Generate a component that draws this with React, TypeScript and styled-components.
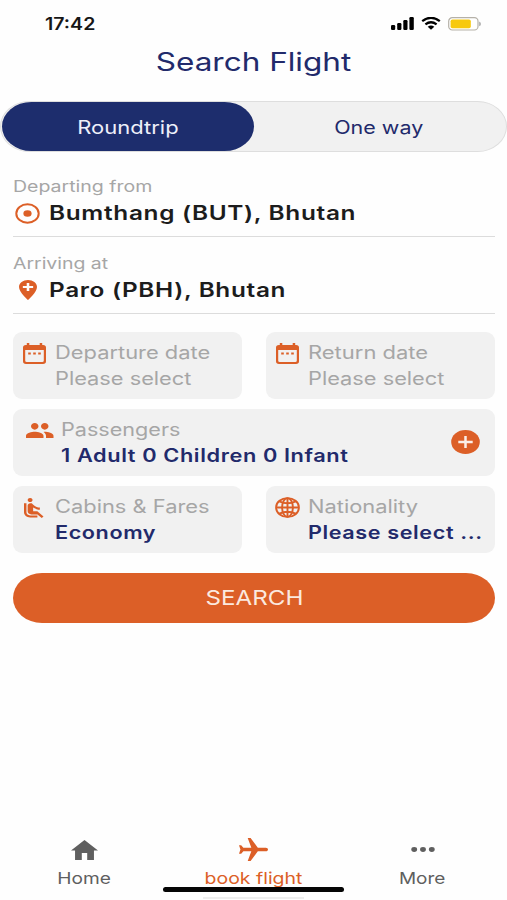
import React from "react";
import styled, { createGlobalStyle } from "styled-components";

const color = {
  navy: "#1d2d6d",
  navyText: "#222a6b",
  orange: "#dc5f27",
  grey: "#a6a6a6",
  panel: "#f1f1f1",
  line: "#dedede",
  nav: "#5f5f5f",
};

const GlobalStyle = createGlobalStyle`
  *, *::before, *::after { box-sizing: border-box; }
  body {
    margin: 0;
    background: #fefefe;
    font-family: Inter, "Liberation Sans", sans-serif;
    overflow: hidden;
  }
  button { font: inherit; border: 0; padding: 0; background: none; text-align: left; }
`;

const Screen = styled.div`
  width: 507px;
  height: 900px;
  display: flex;
  flex-direction: column;
  overflow: hidden;
`;

/* Wide lettering: glyphs keep their height and grow sideways. */
const Wide = styled.span<{ $x?: number; $from?: string }>`
  display: inline-block;
  white-space: pre;
  transform: scaleX(${(p) => p.$x ?? 1.21});
  transform-origin: ${(p) => p.$from ?? "left"} center;
`;

const StatusBar = styled.header`
  height: 46px;
  flex: none;
  display: flex;
  align-items: center;
  justify-content: space-between;
  padding: 1px 26px 0 45px;
`;

const Clock = styled.time`
  font-size: 17px;
  font-weight: 600;
  color: #161616;
`;

const StatusIcons = styled.div`
  display: flex;
  align-items: center;
  gap: 7px;
`;

const Title = styled.h1`
  margin: 0;
  height: 32px;
  line-height: 32px;
  flex: none;
  text-align: center;
  font-size: 25.3px;
  font-weight: 400;
  color: ${color.navyText};
`;

const TripSwitch = styled.div`
  flex: none;
  margin-top: 23px;
  height: 51px;
  display: grid;
  grid-template-columns: 1fr 1fr;
  border: 1px solid ${color.line};
  border-radius: 30px / 26px;
  background: ${color.panel};
`;

const TripOption = styled.button<{ $active?: boolean }>`
  text-align: center;
  font-size: 18.2px;
  border-radius: 30px / 25px;
  margin: 0 1px 0 ${(p) => (p.$active ? 1 : 0)}px;
  margin-right: ${(p) => (p.$active ? 0 : 2)}px;
  color: ${(p) => (p.$active ? "#eef0fa" : color.navyText)};
  background: ${(p) => (p.$active ? color.navy : "transparent")};
`;

const Form = styled.main`
  flex: 1;
  display: flex;
  flex-direction: column;
  padding: 25px 12px 0 13px;
`;

const Place = styled.section`
  height: 60px;
  border-bottom: 1px solid #dcdcdc;
  margin-bottom: 17px;
`;

const PlaceLabel = styled.div`
  height: 20px;
  line-height: 20px;
  font-size: 15.8px;
  color: ${color.grey};
`;

const PlaceValue = styled.div`
  display: flex;
  align-items: center;
  height: 32px;
  font-size: 19.8px;
  font-weight: 600;
  letter-spacing: 0.55px;
  color: #1c1c1c;
`;

const PlaceIcon = styled.span`
  flex: none;
  width: 29px;
  margin-right: 7px;
  display: flex;
  justify-content: center;
  color: ${color.orange};
`;

const Cards = styled.div`
  display: grid;
  grid-template-columns: 229px 229px;
  column-gap: 24px;
  row-gap: 10px;
  grid-auto-rows: 67px;
  margin-top: 1px;
`;

const Card = styled.button<{ $full?: boolean }>`
  grid-column: ${(p) => (p.$full ? "1 / -1" : "auto")};
  display: flex;
  align-items: flex-start;
  padding: 8px 15px 0 ${(p) => (p.$full ? 13 : 8)}px;
  border-radius: 9px;
  background: ${color.panel};
`;

const CardIcon = styled.span<{ $wide?: boolean }>`
  flex: none;
  width: ${(p) => (p.$wide ? 28 : 26)}px;
  margin-right: ${(p) => (p.$wide ? 6.5 : 7.5)}px;
  height: 27px;
  display: flex;
  align-items: center;
  justify-content: center;
  color: ${color.orange};
`;

const CardText = styled.span`
  flex: 1;
  min-width: 0;
  display: flex;
  flex-direction: column;
  align-items: flex-start;
  font-size: 18px;
  line-height: 26px;
  color: ${color.grey};
`;

const Strong = styled(Wide)`
  font-weight: 600;
  letter-spacing: 0.5px;
  color: ${color.navyText};
`;

const AddSlot = styled.span`
  align-self: center;
  display: flex;
  margin-top: -9px;
  color: ${color.orange};
`;

const SearchButton = styled.button`
  margin-top: 20px;
  height: 50px;
  border-radius: 29px / 25px;
  background: ${color.orange};
  color: #fbe9df;
  font-size: 20px;
  text-align: center;
`;

const TabBar = styled.nav`
  flex: none;
  height: 51px;
  display: grid;
  grid-template-columns: repeat(3, 1fr);
`;

const Tab = styled.a<{ $active?: boolean }>`
  display: flex;
  flex-direction: column;
  align-items: center;
  font-size: 16.5px;
  line-height: 24px;
  color: ${(p) => (p.$active ? color.orange : color.nav)};
`;

const TabIcon = styled.span`
  height: 27px;
  margin-bottom: 3px;
  display: flex;
  align-items: center;
`;

const HomeArea = styled.footer`
  position: relative;
  z-index: 1;
  flex: none;
  height: 13px;
  display: flex;
  flex-direction: column;
  align-items: center;
  gap: 5px;
`;

const HomeIndicator = styled.div`
  flex: none;
  width: 181px;
  height: 5px;
  border-radius: 3px;
  background: #050505;
`;

const Underline = styled.div`
  flex: none;
  width: 101px;
  height: 2px;
  background: #ededed;
`;

type GlyphProps = { w: number; h: number; box: string; children: React.ReactNode };

const Glyph = ({ w, h, box, children }: GlyphProps) => (
  <svg width={w} height={h} viewBox={box} preserveAspectRatio="none" fill="currentColor" aria-hidden>
    {children}
  </svg>
);

const Signal = () => (
  <Glyph w={23} h={13} box="0 0 23 13">
    <rect x="0" y="8" width="4.2" height="5" rx="1.2" />
    <rect x="6.2" y="6" width="4.2" height="7" rx="1.2" />
    <rect x="12.3" y="3" width="4.2" height="10" rx="1.2" />
    <rect x="18.4" y="0" width="4.4" height="13" rx="1.2" />
  </Glyph>
);

const Wifi = () => (
  <Glyph w={20} h={13} box="0 0 20 13">
    <path d="M1.2 4.2Q10-2.6 18.8 4.2M4.4 7.4Q10 3.2 15.6 7.4" fill="none" stroke="currentColor" strokeWidth="2.3" />
    <path d="M10 12.8 6.7 9.7Q10 7.4 13.3 9.7z" />
  </Glyph>
);

const Battery = () => (
  <Glyph w={33} h={14} box="0 0 33 14">
    <rect x=".7" y=".7" width="29.3" height="12.3" rx="3.6" fill="#fff" stroke="#b5b1a8" strokeWidth="1.2" />
    <rect x="2.6" y="2.5" width="20.2" height="8.8" rx="1.8" fill="#f7c90f" />
    <path d="M31.2 4.6q1.7.7 1.7 2.3t-1.7 2.3z" fill="#a9a9a9" />
  </Glyph>
);

const Origin = () => (
  <Glyph w={25} h={21} box="0 0 25 21">
    <ellipse cx="12.5" cy="10.5" rx="11.2" ry="9.3" fill="none" stroke="currentColor" strokeWidth="2" />
    <ellipse cx="12.5" cy="10.5" rx="4.1" ry="3.3" />
  </Glyph>
);

const Destination = () => (
  <Glyph w={18} h={20} box="5 2 14 20">
    <path d="M12 2C8.14 2 5 5.14 5 9c0 5.25 7 13 7 13s7-7.75 7-13c0-3.86-3.14-7-7-7zm4 8h-3v3h-2v-3H8V8h3V5h2v3h3v2z" />
  </Glyph>
);

const Calendar = () => (
  <Glyph w={23} h={21} box="0 0 23 21">
    <path
      fillRule="evenodd"
      d="M3.8 0h2.5v2h10.4V0h2.500v2h.9Q23 2 23 4.600V18.300Q23 21 20 21H3Q0 21 0 18.300V4.600Q0 2 2.900 2h.9zM2.200 7v10.500q0 1.600 1.500 1.600h15.600q1.500 0 1.500-1.600V7z"
    />
    <path d="M5.200 9.500h2.600v2H5.200zm5 0h2.600v2h-2.600zm5 0h2.600v2h-2.600z" />
  </Glyph>
);

const People = () => (
  <Glyph w={27.5} h={15.5} box="1 5 22 14">
    <path d="M16 11c1.660 0 2.990-1.340 2.990-3S17.660 5 16 5c-1.660 0-3 1.340-3 3s1.340 3 3 3zm-8 0c1.660 0 2.990-1.340 2.990-3S9.660 5 8 5C6.340 5 5 6.340 5 8s1.340 3 3 3zm0 2c-2.330 0-7 1.170-7 3.500V19h14v-2.500c0-2.330-4.670-3.500-7-3.500zm8 0c-.290 0-.620.020-.970.050 1.160.840 1.970 1.970 1.970 3.450V19h6v-2.500c0-2.330-4.670-3.500-7-3.500z" />
  </Glyph>
);

const Seat = () => (
  <Glyph w={19.5} h={20} box="4 2 16 19.5">
    <path d="M7.590 5.410c-.780-.780-.780-2.050 0-2.830.780-.780 2.050-.780 2.830 0 .780.780.780 2.050 0 2.830-.790.790-2.050.790-2.830 0zM6 16V7H4v9c0 2.760 2.240 5 5 5h6v-2H9c-1.660 0-3-1.340-3-3zm14 4.070L14.930 15H11.500v-3.680c1.400 1.150 3.600 2.160 5.500 2.160v-2.160c-1.660.020-3.610-.870-4.670-2.040l-1.400-1.550c-.190-.210-.430-.380-.690-.500-.290-.140-.620-.230-.960-.230h-.030C8.010 7 7 8.010 7 9.250V15c0 1.660 1.340 3 3 3h5.070l3.500 3.500L20 20.070z" />
  </Glyph>
);

const Globe = () => (
  <Glyph w={25} h={21} box="0 0 25 21">
    <g fill="none" stroke="currentColor" strokeWidth="1.9">
      <ellipse cx="12.5" cy="10.5" rx="11.4" ry="9.4" />
      <ellipse cx="12.5" cy="10.5" rx="5.4" ry="9.4" />
      <path d="M12.5 1v19M1 10.5h23M4.300 4.300q8.200 4 16.400 0M4.300 16.700q8.200-4 16.400 0" />
    </g>
  </Glyph>
);

const Add = () => (
  <Glyph w={29} h={24} box="0 0 29 24">
    <ellipse cx="14.5" cy="12" rx="14.3" ry="11.9" />
    <path d="M14.5 6v12M7.300 12h14.400" stroke="#fbeee7" strokeWidth="2.5" />
  </Glyph>
);

const Home = () => (
  <Glyph w={27} h={20} box="2 3 20 17">
    <path d="M10 20v-6h4v6h5v-8h3L12 3 2 12h3v8z" />
  </Glyph>
);

const Plane = () => (
  <Glyph w={29} h={23} box="-22 2 20 19">
    <path
      transform="rotate(90)"
      d="M21 16v-2l-8-5V3.500c0-.830-.670-1.500-1.500-1.500S10 2.670 10 3.500V9l-8 5v2l8-2.500V19l-2 1.500V22l3.500-1 3.500 1v-1.500L13 19v-5.500l8 2.500z"
    />
  </Glyph>
);

const More = () => (
  <Glyph w={24} h={5} box="0 0 24 5">
    <ellipse cx="3.2" cy="2.5" rx="2.9" ry="2.4" />
    <ellipse cx="12" cy="2.5" rx="2.9" ry="2.4" />
    <ellipse cx="20.8" cy="2.5" rx="2.9" ry="2.4" />
  </Glyph>
);

export default function App() {
  return (
    <Screen>
      <GlobalStyle />
      <StatusBar>
        <Clock><Wide $x={1.15}>17:42</Wide></Clock>
        <StatusIcons><Signal /><Wifi /><Battery /></StatusIcons>
      </StatusBar>
      <Title><Wide $x={1.245} $from="center">Search Flight</Wide></Title>
      <TripSwitch>
        <TripOption $active><Wide $x={1.21} $from="center">Roundtrip</Wide></TripOption>
        <TripOption><Wide $x={1.18} $from="center">One way</Wide></TripOption>
      </TripSwitch>

      <Form>
        <Place>
          <PlaceLabel><Wide $x={1.235}>Departing from</Wide></PlaceLabel>
          <PlaceValue>
            <PlaceIcon><Origin /></PlaceIcon>
            <Wide $x={1.232}>Bumthang (BUT), Bhutan</Wide>
          </PlaceValue>
        </Place>
        <Place>
          <PlaceLabel><Wide $x={1.23}>Arriving at</Wide></PlaceLabel>
          <PlaceValue>
            <PlaceIcon><Destination /></PlaceIcon>
            <Wide $x={1.23}>Paro (PBH), Bhutan</Wide>
          </PlaceValue>
        </Place>

        <Cards>
          <Card>
            <CardIcon><Calendar /></CardIcon>
            <CardText><Wide $x={1.215}>Departure date</Wide><Wide>Please select</Wide></CardText>
          </Card>
          <Card>
            <CardIcon><Calendar /></CardIcon>
            <CardText><Wide $x={1.22}>Return date</Wide><Wide>Please select</Wide></CardText>
          </Card>
          <Card $full>
            <CardIcon $wide><People /></CardIcon>
            <CardText><Wide $x={1.2}>Passengers</Wide><Strong $x={1.21}>1 Adult 0 Children 0 Infant</Strong></CardText>
            <AddSlot><Add /></AddSlot>
          </Card>
          <Card>
            <CardIcon><Seat /></CardIcon>
            <CardText><Wide $x={1.215}>Cabins &amp; Fares</Wide><Strong $x={1.2}>Economy</Strong></CardText>
          </Card>
          <Card>
            <CardIcon><Globe /></CardIcon>
            <CardText><Wide $x={1.215}>Nationality</Wide><Strong $x={1.2}>Please select ...</Strong></CardText>
          </Card>
        </Cards>

        <SearchButton><Wide $x={1.21} $from="center">SEARCH</Wide></SearchButton>
      </Form>

      <TabBar>
        <Tab><TabIcon><Home /></TabIcon><Wide $x={1.16} $from="center">Home</Wide></Tab>
        <Tab $active><TabIcon><Plane /></TabIcon><Wide $x={1.18} $from="center">book flight</Wide></Tab>
        <Tab><TabIcon><More /></TabIcon><Wide $x={1.15} $from="center">More</Wide></Tab>
      </TabBar>
      <HomeArea><HomeIndicator /><Underline /></HomeArea>
    </Screen>
  );
}
